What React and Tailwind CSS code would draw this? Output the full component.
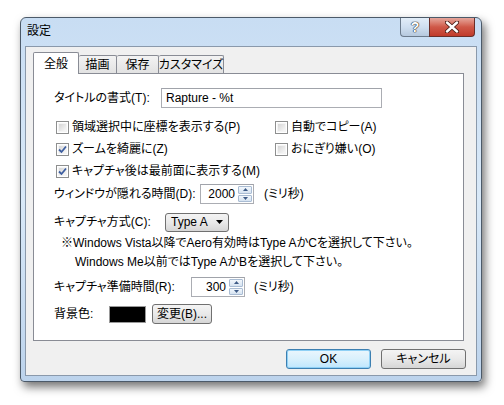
import React from "react";

// Win7 style checkbox
const CheckBox = ({ checked, label }) => {
  return (
    <div className="flex items-center h-[22px]">
      <div className="w-[13px] h-[13px] border border-[#8e8f8f] bg-white p-px shrink-0">
        <div className="relative w-full h-full bg-gradient-to-br from-[#d6d6d6] to-[#f8f8f8] border border-[#f4f4f4]">
          {checked && (
            <svg
              className="absolute -left-[1px] -top-[1px]"
              width="9"
              height="9"
              viewBox="0 0 9 9"
            >
              <path
                d="M1 4.5 L3.5 7 L8 1.5"
                fill="none"
                stroke="#3d5ea0"
                strokeWidth="1.8"
              />
            </svg>
          )}
        </div>
      </div>
      <span className="ml-[3px] whitespace-nowrap">{label}</span>
    </div>
  );
};

// numeric box with up/down arrows
const SpinBox = ({ value, width }) => {
  return (
    <div
      className={`flex h-[20px] items-stretch border border-[#abadb3] border-t-[#a0a3aa] bg-white shrink-0 ${width}`}
    >
      <span className="flex-1 text-right pr-[3px] leading-[18px]">{value}</span>
      <div className="flex flex-col w-[14px] my-px mr-px gap-px">
        <div className="flex-1 flex items-center justify-center border border-[#a9bcd3] rounded-[1px] bg-gradient-to-b from-[#f2f7fc] to-[#d6e3f1]">
          <svg width="5" height="3" viewBox="0 0 5 3">
            <path d="M0 3 L2.5 0 L5 3 Z" fill="#3d5a86" />
          </svg>
        </div>
        <div className="flex-1 flex items-center justify-center border border-[#a9bcd3] rounded-[1px] bg-gradient-to-b from-[#f2f7fc] to-[#d6e3f1]">
          <svg width="5" height="3" viewBox="0 0 5 3">
            <path d="M0 0 L2.5 3 L5 0 Z" fill="#3d5a86" />
          </svg>
        </div>
      </div>
    </div>
  );
};

const App = () => {
  return (
    <div className="w-[504px] h-[405px] bg-white overflow-hidden pl-[20px] pt-[17px] text-[12px] text-black whitespace-nowrap font-['Liberation_Sans','Noto_Sans_CJK_JP',sans-serif] [font-feature-settings:'palt']">
      <div className="w-[462px] h-[365px] flex flex-col rounded-t-[6px] rounded-b-[4px] border border-[#4c5a69] bg-gradient-to-b from-[#c8ddf3] via-[#d9e9f8] to-[#bcd3ec] shadow-[3px_5px_10px_rgba(0,0,0,0.55)]">
        {/* title bar */}
        <div className="flex justify-between items-start h-[28px] shrink-0">
          <span className="pl-[6px] pt-[6px] leading-[14px]">設定</span>
          <div className="flex mr-[6px]">
            <div className="w-[29px] h-[19px] flex items-center justify-center border border-[#6b7b8c] border-t-0 border-r-0 rounded-bl-[4px] bg-gradient-to-b from-[#e2edf8] via-[#cfdff0] to-[#b6c9de]">
              <span className="text-white font-bold text-[14px] leading-none [text-shadow:0_0_1px_#222,0_0_1px_#222,0_0_1px_#222]">
                ?
              </span>
            </div>
            <div className="w-[46px] h-[19px] flex items-center justify-center border border-[#6a2e28] border-t-0 rounded-br-[4px] bg-gradient-to-b from-[#e5a69c] via-[#cf5848] to-[#c03a2a]">
              <svg width="14" height="12" viewBox="0 0 14 12">
                <path
                  d="M2 1.5 L12 10.5 M12 1.5 L2 10.5"
                  stroke="#4a1c16"
                  strokeWidth="4.2"
                  strokeLinecap="round"
                />
                <path
                  d="M2 1.5 L12 10.5 M12 1.5 L2 10.5"
                  stroke="#ffffff"
                  strokeWidth="2.4"
                  strokeLinecap="round"
                />
              </svg>
            </div>
          </div>
        </div>

        {/* client area */}
        <div className="flex-1 mx-[4px] mb-[5px] border border-[#8a99ab] bg-[#f0f0f0] pl-[7px] pt-[5px] pr-[7px]">
          {/* tabs */}
          <div className="flex items-end h-[21px]">
            <div className="relative z-10 h-[22px] -mb-px w-[46px] flex items-center justify-center border border-b-0 border-[#898c95] rounded-t-[2px] bg-white">
              全般
            </div>
            <div className="h-[18px] w-[38px] flex items-center justify-center border border-b-0 border-l-0 border-[#898c95] rounded-t-[2px] bg-gradient-to-b from-[#f3f3f3] to-[#e2e2e2]">
              描画
            </div>
            <div className="h-[18px] w-[42px] flex items-center justify-center border border-b-0 border-l-0 border-[#898c95] rounded-t-[2px] bg-gradient-to-b from-[#f3f3f3] to-[#e2e2e2]">
              保存
            </div>
            <div className="h-[18px] w-[65px] flex items-center justify-center border border-b-0 border-l-0 border-[#898c95] rounded-t-[2px] bg-gradient-to-b from-[#f3f3f3] to-[#e2e2e2]">
              カスタマイズ
            </div>
          </div>

          {/* tab panel */}
          <div className="w-[431px] h-[268px] border border-[#898c95] bg-white pl-[20px] pt-[14px]">
            <div className="flex items-center h-[20px]">
              <span className="w-[107px] shrink-0">タイトルの書式(T):</span>
              <div className="w-[221px] h-[20px] border border-[#abadb3] border-t-[#a0a3aa] bg-white pl-[4px] leading-[18px]">
                Rapture - %t
              </div>
            </div>

            <div className="grid grid-cols-[219px_auto] ml-[2px] mt-[8px]">
              <CheckBox label="領域選択中に座標を表示する(P)" />
              <CheckBox label="自動でコピー(A)" />
              <CheckBox checked label="ズームを綺麗に(Z)" />
              <CheckBox label="おにぎり嫌い(O)" />
              <div className="col-span-2">
                <CheckBox checked label="キャプチャ後は最前面に表示する(M)" />
              </div>
            </div>

            <div className="flex items-center h-[22px] mt-px">
              <span className="w-[146px] shrink-0">ウィンドウが隠れる時間(D):</span>
              <SpinBox value="2000" width="w-[54px]" />
              <span className="ml-[10px]">(ミリ秒)</span>
            </div>

            <div className="flex items-center h-[22px] mt-[6px]">
              <span className="w-[111px] shrink-0">キャプチャ方式(C):</span>
              <div className="flex items-center justify-between w-[64px] h-[19px] border border-[#707070] rounded-[3px] bg-gradient-to-b from-[#f4f4f4] via-[#e9e9e9] to-[#d6d6d6] px-[5px]">
                <span>Type A</span>
                <svg width="7" height="4" viewBox="0 0 7 4">
                  <path d="M0 0 L7 0 L3.5 4 Z" fill="#000" />
                </svg>
              </div>
            </div>

            <div className="pl-[7px] h-[19px] leading-[19px] mt-px">
              ※Windows Vista以降でAero有効時はType AかCを選択して下さい。
            </div>
            <div className="pl-[21px] h-[19px] leading-[19px]">
              Windows Me以前ではType AかBを選択して下さい。
            </div>

            <div className="flex items-center h-[22px] mt-[4px]">
              <span className="w-[137px] shrink-0">キャプチャ準備時間(R):</span>
              <SpinBox value="300" width="w-[54px]" />
              <span className="ml-[9px]">(ミリ秒)</span>
            </div>

            <div className="flex items-center h-[22px] mt-[5px]">
              <span className="w-[55px] shrink-0">背景色:</span>
              <div className="w-[37px] h-[17px] bg-black border border-[#999]" />
              <div className="ml-[6px] h-[20px] px-[4px] flex items-center border border-[#707070] rounded-[3px] bg-gradient-to-b from-[#f4f4f4] via-[#e9e9e9] to-[#d6d6d6]">
                変更(B)...
              </div>
            </div>
          </div>

          {/* dialog buttons */}
          <div className="flex justify-end gap-[10px] mt-[8px] w-[433px]">
            <div className="w-[85px] h-[20px] flex items-center justify-center border border-[#3c7fb1] rounded-[3px] bg-gradient-to-b from-[#eaf6fd] via-[#d9f0fc] to-[#bee6fd] shadow-[inset_0_0_0_1px_#8fd0f5]">
              OK
            </div>
            <div className="w-[85px] h-[20px] flex items-center justify-center border border-[#707070] rounded-[3px] bg-gradient-to-b from-[#f4f4f4] via-[#e9e9e9] to-[#d6d6d6]">
              キャンセル
            </div>
          </div>
        </div>
      </div>
    </div>
  );
};

export default App;
